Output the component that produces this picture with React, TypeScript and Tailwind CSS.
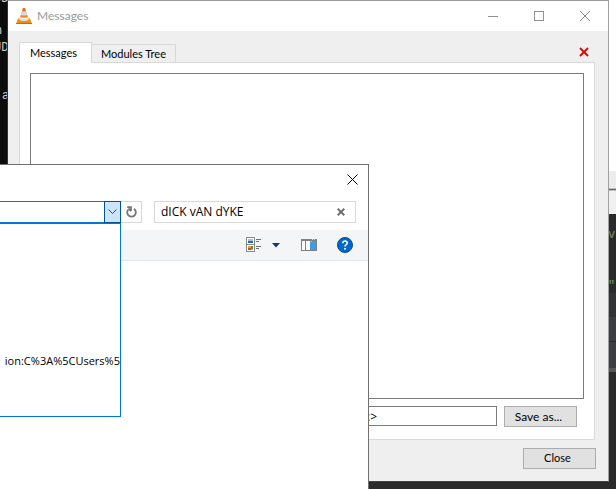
import type { ReactNode } from "react";

function ConeIcon() {
  return (
    <svg width="16" height="18" viewBox="0 0 16 18" aria-hidden="true">
      <path d="M2 11.500h12l2 5.500H0z" fill="#f58b0a" />
      <path d="M0 16h16v1H0z" fill="#c96a00" />
      <path d="M7 1h2l4 12.500q-5 2-10 0z" fill="#f0861c" />
      <path d="M5.900 4.500h4.200l1.100 3.500q-3.200 1-6.400 0z" fill="#d5dce1" />
      <path d="M4.200 10q3.800 1.200 7.600 0l1 3q-4.800 2-9.600 0z" fill="#e4e7e9" />
      <path d="M7 1h2l.8 2.500H6.200z" fill="#d9742a" />
    </svg>
  );
}

function CaptionButton({ label, children }: { label: string; children: ReactNode }) {
  return (
    <button type="button" aria-label={label} className="flex h-full w-[46px] items-center justify-center">
      <svg width="10" height="10" viewBox="0 0 10 10" fill="none" stroke="#909090" shapeRendering="crispEdges">
        {children}
      </svg>
    </button>
  );
}

function MessagesWindow() {
  return (
    <section className="absolute top-0 right-[7px] bottom-[7px] left-[7px] flex flex-col border border-t-[#999999] border-r-[#a0a0a0] border-b-[#444444] border-l-[#333333] bg-[#efefef]">
      <header className="flex h-[30px] shrink-0 items-center bg-white pl-[8px]">
        <ConeIcon />
        <h1 className="ml-[5px] grow text-[12px] text-[#999999]">Messages</h1>
        <CaptionButton label="Minimize">
          <path d="M0 5.500h10" />
        </CaptionButton>
        <CaptionButton label="Maximize">
          <path d="M.5.5h9v9h-9z" />
        </CaptionButton>
        <CaptionButton label="Close window">
          <path d="M0 0l10 10M10 0L0 10" shapeRendering="auto" />
        </CaptionButton>
      </header>
      <div className="flex min-h-0 grow flex-col pt-[11px] pr-[13px] pb-[12px] pl-[11px]">
        <div className="flex h-[20px] shrink-0 items-end" role="tablist">
          <button type="button" role="tab" aria-selected="true" className="z-10 -mb-px h-[21px] w-[73px] shrink-0 border border-b-0 border-[#d9d9d9] bg-white pr-1 text-[11px]">
            Messages
          </button>
          <button type="button" role="tab" aria-selected="false" className="h-[18px] w-[84px] shrink-0 border border-b-0 border-l-0 border-[#d9d9d9] text-[11px] leading-[18px]">
            Modules Tree
          </button>
          <button type="button" aria-label="Clear messages" className="mr-[6px] mb-[5px] ml-auto">
            <svg width="10" height="10" viewBox="0 0 10 10" stroke="#dc0c0c" strokeWidth="2">
              <path d="M1 1l8 8M9 1L1 9" />
            </svg>
          </button>
        </div>
        <div className="flex min-h-0 grow flex-col border border-[#d9d9d9] bg-white p-[10px] pb-[12px]">
          <textarea aria-label="Log" className="min-h-0 grow resize-none border border-[#7a7a7a] bg-white" />
          <div className="mt-[7px] flex h-[21px] items-start gap-[7px] pr-[7px]">
            <input
              aria-label="Filter"
              defaultValue=":>"
              className="h-[20px] min-w-0 grow border border-[#7a7a7a] bg-white pl-[336px] font-['Open_Sans',sans-serif] text-[12px]"
            />
            <button type="button" className="h-[21px] w-[73px] shrink-0 border border-[#adadad] bg-[#e1e1e1] pr-1 text-[12px]">
              Save as...
            </button>
          </div>
        </div>
        <button type="button" className="-mr-px mt-[8px] h-[21px] w-[73px] shrink-0 self-end border border-[#adadad] bg-[#e1e1e1] pr-1 text-[11px]">
          Close
        </button>
      </div>
    </section>
  );
}

function FileDialog() {
  return (
    <section className="absolute top-[164px] bottom-0 left-0 w-[369px] border-t border-r border-[#707070] bg-white font-['Open_Sans',sans-serif]">
      <div className="flex h-[36px] items-center justify-end pr-[10px] pb-[8px]">
        <button type="button" aria-label="Close dialog">
          <svg width="11" height="11" viewBox="0 0 11 11" stroke="#000000" fill="none">
            <path d="M.5.5l10 10M10.500.5l-10 10" />
          </svg>
        </button>
      </div>
      <div className="flex h-[22px] pr-[12px]">
        <div className="flex w-[121px] shrink-0">
          <input aria-label="Address" className="min-w-0 grow border-y border-[#0078d7] bg-white" />
          <button type="button" aria-label="Previous locations" className="flex w-[17px] shrink-0 items-center justify-center border border-[#005499] bg-[#cce4f7]">
            <svg width="9" height="6" viewBox="0 0 9 6" fill="none" stroke="#444444">
              <path d="M.5.5l4 4 4-4" />
            </svg>
          </button>
        </div>
        <button type="button" aria-label="Refresh" className="flex w-[21px] items-center justify-center border border-l-0 border-[#d9d9d9]">
          <svg width="11" height="12" viewBox="0 0 11 12" fill="none" stroke="#777777" strokeWidth="1.800">
            <path d="M2.200 3.600A4.300 4.300 0 1 0 8 2.800" />
            <path d="M1.200 1.200H5V5" />
            <path d="M5 5L2.500 2.500" />
          </svg>
        </button>
        <div className="ml-[12px] flex grow items-center border border-[#d9d9d9] pr-[10px] pl-[6px]">
          <input aria-label="Search" defaultValue="dICK vAN dYKE" className="h-[18px] min-w-0 grow bg-white text-[12px] outline-none" />
          <button type="button" aria-label="Clear search">
            <svg width="8" height="8" viewBox="0 0 8 8" stroke="#707070" strokeWidth="2">
              <path d="M.7.7l6.600 6.600M7.300.7L.7 7.300" />
            </svg>
          </button>
        </div>
      </div>
      <div className="flex items-start">
        <ul className="h-[194px] w-[121px] shrink-0 overflow-hidden border-t border-r border-b border-[#0078d7] bg-white pt-[128px] text-[11px] leading-[18px] whitespace-nowrap">
          <li className="flex justify-end">ion:C%3A%5CUsers%5</li>
        </ul>
        <div className="mt-[7px] flex h-[31px] grow items-center justify-end border-b border-[#e5e7ea] bg-[#f4f5f7] pr-[15px]">
          <button type="button" aria-label="Change view">
            <svg width="16" height="16" viewBox="0 0 16 16" shapeRendering="crispEdges">
              <path d="M.5.5h8v14h-8zM.5 7.500h8" fill="#ffffff" stroke="#8a8a8a" />
              <path d="M2 2h5v2H2z" fill="#9cc8ed" />
              <path d="M2 4h5v2H2z" fill="#2c6b9b" />
              <path d="M2 9h5v4H2z" fill="#e3a12f" />
              <path d="M2 11h3v2H2z" fill="#c44f29" />
              <path d="M5 9h2v3H5z" fill="#4f9c45" />
              <path d="M10 2.500h5M10 4.500h3M10 9.500h5M10 11.500h3" stroke="#707070" fill="none" />
            </svg>
          </button>
          <button type="button" aria-label="More views" className="ml-[10px]">
            <svg width="8" height="5" viewBox="0 0 8 5">
              <path d="M0 0h8L4 4.500z" fill="#1b365d" />
            </svg>
          </button>
          <button type="button" aria-label="Preview pane" className="ml-[21px]">
            <svg width="16" height="12" viewBox="0 0 16 12" shapeRendering="crispEdges">
              <path d="M0 0h16v12H0z" fill="#808080" />
              <path d="M1 2h3v9H1zM5 2h4v9H5z" fill="#ffffff" />
              <path d="M9 2h6v9H9z" fill="#3f9be3" />
              <path d="M11 0h1v1h-1zM13 0h1v1h-1z" fill="#dddddd" />
              <path d="M9 2h2v1H9z" fill="#7cc0f4" />
            </svg>
          </button>
          <button type="button" aria-label="Help" className="ml-[20px]">
            <svg width="16" height="16" viewBox="0 0 16 16">
              <circle cx="8" cy="8" r="7.500" fill="#0067cc" stroke="#0a4a85" />
              <path d="M5.800 6.200Q5.800 4 8 4t2.200 1.900C10.200 7.500 8 7.600 8 9.500" fill="none" stroke="#ffffff" strokeWidth="1.600" />
              <circle cx="8" cy="11.800" r="1" fill="#ffffff" />
            </svg>
          </button>
        </div>
      </div>
    </section>
  );
}

function Backdrop() {
  return (
    <div className="flex h-full justify-between bg-[#2b2b2b]">
      <pre className="w-[323px] overflow-hidden bg-[#0c0c0c] font-['Liberation_Mono',monospace] text-[12px] leading-[16px] text-[#cccccc]">
        <span className="-mt-[9px] -ml-[6px] block">UD</span>
        <span className="mt-[16px] -ml-[5px] block">n</span>
        <span className="-ml-[6px] block pt-[1px]">UD</span>
        <span className="mt-[32px] block pl-[2px]">a</span>
      </pre>
      <div className="flex w-[8px] flex-col overflow-hidden font-['Liberation_Mono',monospace] text-[12px] leading-[16px] text-[#6a9a55]">
        <div className="h-[171px] shrink-0 bg-white" />
        <div className="h-[17px] shrink-0 bg-[#ececec]" />
        <div className="h-[3px] shrink-0 border-y border-[#c0c0c0] bg-[#666666]" />
        <div className="h-[23px] shrink-0 bg-[#f0f0f0]" />
        <div className="h-[79px] shrink-0 pt-[13px]">
          <span className="block">v</span>
          <span className="mt-[35px] block">"</span>
        </div>
        <div className="h-[24px] shrink-0 bg-[#313335]" />
        <div className="h-[24px] shrink-0 bg-[#3c3f41]" />
        <div className="h-[27px] shrink-0 border-t border-[#2b2b2b] bg-[#3c3f41]" />
        <div className="h-[4px] shrink-0 bg-[#555758]" />
      </div>
    </div>
  );
}

export default function App() {
  return (
    <main className="relative h-screen min-h-[440px] overflow-hidden font-['Lato','Open_Sans',sans-serif] text-black">
      <Backdrop />
      <MessagesWindow />
      <FileDialog />
    </main>
  );
}
